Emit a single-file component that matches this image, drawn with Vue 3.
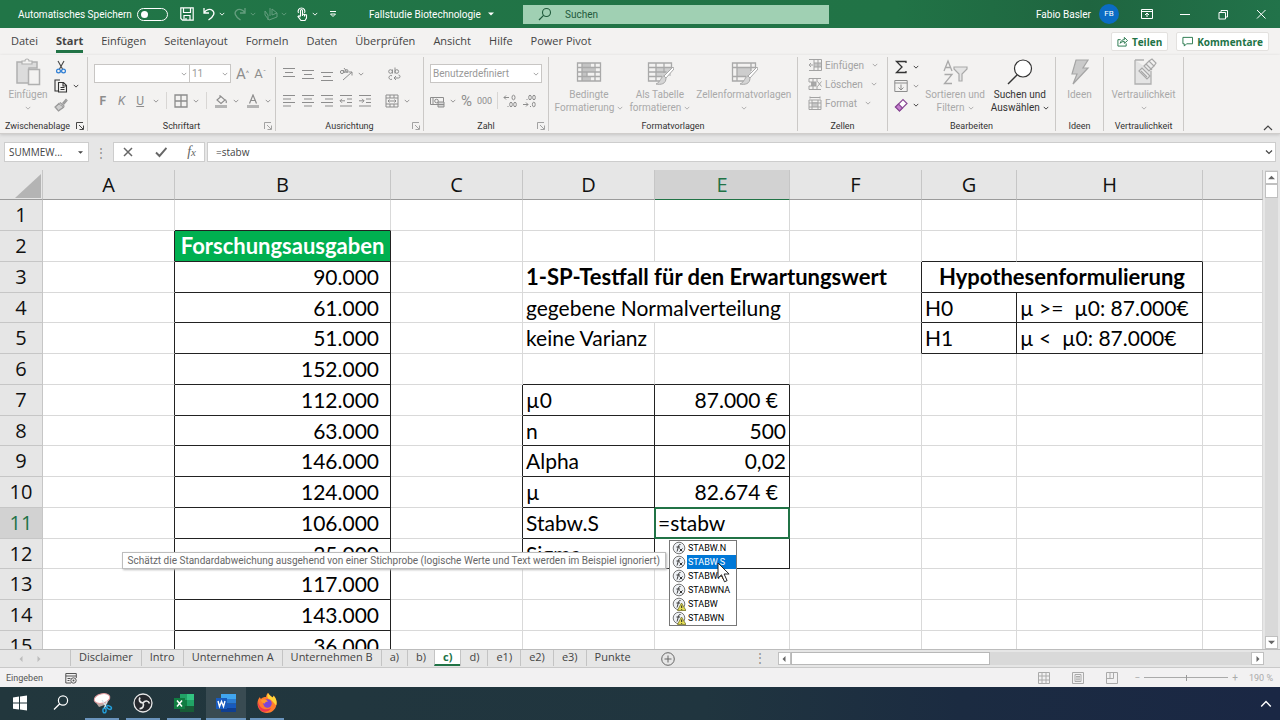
<template>
  <div class="window">
    <!-- title bar -->
    <header class="titlebar">
      <div class="title-left">
        <label class="autosave" for="autosave">Automatisches Speichern</label>
        <input id="autosave" type="checkbox" class="toggle" />
        <div class="quick">
          <button v-for="q in quickAccess" :key="q.icon" :class="['q-btn', { faded: q.faded }]" :aria-label="q.label">
            <Icon :name="q.icon" :w="14" :h="14" />
            <Icon v-if="q.menu" name="chev" :w="6" :h="6" />
          </button>
        </div>
        <button class="doc-name">Fallstudie Biotechnologie <Icon name="triDown" :w="6" :h="6" /></button>
      </div>
      <div class="search">
        <Icon name="search" :w="14" :h="14" />
        <input type="text" aria-label="Suchen" placeholder="Suchen" />
      </div>
      <div class="title-right">
        <span class="user">Fabio Basler</span>
        <span class="avatar">FB</span>
        <button v-for="w in windowButtons" :key="w.icon" class="win-btn" :aria-label="w.label">
          <Icon :name="w.icon" :w="12" :h="12" />
        </button>
      </div>
    </header>

    <!-- ribbon tabs -->
    <nav class="tabs">
      <a v-for="t in tabs" :key="t" href="#" :class="['tab', { active: t === 'Start' }]">{{ t }}</a>
      <div class="tab-actions">
        <button class="action"><Icon name="share" :w="11" :h="11" />Teilen</button>
        <button class="action"><Icon name="comment" :w="11" :h="11" />Kommentare</button>
      </div>
    </nav>

    <!-- ribbon -->
    <section class="ribbon">
      <div class="group clipboard">
        <div class="group-body">
          <button class="big off">
            <Icon name="paste" :w="26" :h="28" />
            <span>Einfügen</span>
            <Icon name="chev" :w="6" :h="6" />
          </button>
          <div class="stack">
            <button class="small on" aria-label="Ausschneiden"><Icon name="cut" :w="14" :h="14" /></button>
            <button class="small on" aria-label="Kopieren"><Icon name="copy" :w="14" :h="14" /><Icon name="chev" :w="6" :h="6" /></button>
            <button class="small" aria-label="Format übertragen"><Icon name="brush" :w="14" :h="14" /></button>
          </div>
        </div>
        <div class="group-name dark-launch">Zwischenablage <Icon name="launch" :w="8" :h="8" class="launcher" /></div>
      </div>

      <div class="group font">
        <div class="group-body column">
          <div class="line">
            <select class="font-name" aria-label="Schriftart"><option></option></select>
            <select class="font-size" aria-label="Schriftgrad"><option>11</option></select>
            <button class="small letter-lg">A<sup>^</sup></button>
            <button class="small letter-sm">A<sup>ˇ</sup></button>
          </div>
          <div class="line spaced">
            <button class="small letter bold">F</button>
            <button class="small letter italic">K</button>
            <button class="small letter under">U</button>
            <Icon name="chev" :w="6" :h="6" />
            <span class="split"></span>
            <button class="small" aria-label="Rahmen"><Icon name="borders" :w="14" :h="14" /><Icon name="chev" :w="6" :h="6" /></button>
            <span class="split"></span>
            <button class="small" aria-label="Füllfarbe"><Icon name="fill" :w="14" :h="14" /><Icon name="chev" :w="6" :h="6" /></button>
            <button class="small" aria-label="Schriftfarbe"><Icon name="fontColor" :w="14" :h="14" /><Icon name="chev" :w="6" :h="6" /></button>
          </div>
        </div>
        <div class="group-name">Schriftart <Icon name="launch" :w="8" :h="8" class="launcher" /></div>
      </div>

      <div class="group align">
        <div class="group-body column">
          <div class="line">
            <button class="small" aria-label="Oben ausrichten"><Icon name="vTop" :w="14" :h="14" /></button>
            <button class="small" aria-label="Zentriert ausrichten"><Icon name="vMid" :w="14" :h="14" /></button>
            <button class="small" aria-label="Unten ausrichten"><Icon name="vBot" :w="14" :h="14" /></button>
            <button class="small" aria-label="Ausrichtung"><Icon name="orient" :w="14" :h="14" /><Icon name="chev" :w="6" :h="6" /></button>
            <button class="small wrap" aria-label="Textumbruch"><Icon name="wrap" :w="14" :h="14" /></button>
          </div>
          <div class="line">
            <button class="small" aria-label="Linksbündig"><Icon name="hLeft" :w="14" :h="14" /></button>
            <button class="small" aria-label="Zentriert"><Icon name="hMid" :w="14" :h="14" /></button>
            <button class="small" aria-label="Rechtsbündig"><Icon name="hRight" :w="14" :h="14" /></button>
            <button class="small" aria-label="Einzug verkleinern"><Icon name="outdent" :w="14" :h="14" /></button>
            <button class="small" aria-label="Einzug vergrößern"><Icon name="indent" :w="14" :h="14" /></button>
            <button class="small merge" aria-label="Verbinden"><Icon name="merge" :w="14" :h="14" /><Icon name="chev" :w="6" :h="6" /></button>
          </div>
        </div>
        <div class="group-name">Ausrichtung <Icon name="launch" :w="8" :h="8" class="launcher" /></div>
      </div>

      <div class="group number">
        <div class="group-body column">
          <div class="line">
            <select class="format" aria-label="Zahlenformat"><option>Benutzerdefiniert</option></select>
          </div>
          <div class="line">
            <button class="small" aria-label="Währung"><Icon name="money" :w="15" :h="14" /><Icon name="chev" :w="6" :h="6" /></button>
            <button class="small percent">%</button>
            <button class="small thousand">000</button>
            <span class="split"></span>
            <button class="small" aria-label="Dezimalstelle hinzufügen"><Icon name="decMore" :w="14" :h="14" /></button>
            <button class="small" aria-label="Dezimalstelle entfernen"><Icon name="decLess" :w="14" :h="14" /></button>
          </div>
        </div>
        <div class="group-name">Zahl <Icon name="launch" :w="8" :h="8" class="launcher" /></div>
      </div>

      <div class="group styles">
        <div class="group-body">
          <button class="big off">
            <Icon name="conditional" :w="28" :h="28" />
            <span>Bedingte</span>
            <span>Formatierung <Icon name="chev" :w="6" :h="6" /></span>
          </button>
          <button class="big off">
            <Icon name="tableFormat" :w="28" :h="28" />
            <span>Als Tabelle</span>
            <span>formatieren <Icon name="chev" :w="6" :h="6" /></span>
          </button>
          <button class="big off">
            <Icon name="cellStyles" :w="28" :h="28" />
            <span>Zellenformatvorlagen</span>
            <Icon name="chev" :w="6" :h="6" />
          </button>
        </div>
        <div class="group-name">Formatvorlagen</div>
      </div>

      <div class="group cells">
        <div class="group-body column tight">
          <button v-for="c in cellActions" :key="c.label" class="small text">
            <Icon :name="c.icon" :w="14" :h="14" />{{ c.label }}<Icon name="chev" :w="6" :h="6" />
          </button>
        </div>
        <div class="group-name">Zellen</div>
      </div>

      <div class="group edit">
        <div class="group-body">
          <div class="stack">
            <button class="small on" aria-label="Summe"><Icon name="sum" :w="14" :h="14" /><Icon name="chev" :w="6" :h="6" /></button>
            <button class="small" aria-label="Ausfüllen"><Icon name="fillDown" :w="14" :h="14" /><Icon name="chev" :w="6" :h="6" /></button>
            <button class="small on" aria-label="Löschen"><Icon name="eraser" :w="14" :h="14" /><Icon name="chev" :w="6" :h="6" /></button>
          </div>
          <button class="big off">
            <Icon name="sort" :w="26" :h="28" />
            <span>Sortieren und</span>
            <span>Filtern <Icon name="chev" :w="6" :h="6" /></span>
          </button>
          <button class="big">
            <Icon name="find" :w="26" :h="28" />
            <span>Suchen und</span>
            <span>Auswählen <Icon name="chev" :w="6" :h="6" /></span>
          </button>
        </div>
        <div class="group-name">Bearbeiten</div>
      </div>

      <div class="group ideas">
        <div class="group-body">
          <button class="big off"><Icon name="bolt" :w="26" :h="28" /><span>Ideen</span></button>
        </div>
        <div class="group-name">Ideen</div>
      </div>

      <div class="group privacy">
        <div class="group-body">
          <button class="big off">
            <Icon name="sensitivity" :w="26" :h="28" />
            <span>Vertraulichkeit</span>
            <Icon name="chev" :w="6" :h="6" />
          </button>
        </div>
        <div class="group-name">Vertraulichkeit</div>
      </div>
      <button class="collapse" aria-label="Menüband reduzieren"><Icon name="caretUp" :w="10" :h="8" /></button>
    </section>

    <!-- formula bar -->
    <section class="formula">
      <button class="name-box">SUMMEW...<Icon name="triDown" :w="5" :h="5" /></button>
      <span class="grip">⋮</span>
      <div class="fx">
        <button aria-label="Abbrechen"><Icon name="cancel" :w="12" :h="12" /></button>
        <button aria-label="Eingeben"><Icon name="check" :w="12" :h="12" /></button>
        <button class="fx-sign"><i>f</i><i class="x">x</i></button>
      </div>
      <div class="formula-input">
        <input v-model="formula" type="text" aria-label="Bearbeitungsleiste" />
        <Icon name="chev" :w="8" :h="8" />
      </div>
    </section>

    <!-- worksheet -->
    <main class="sheet">
      <div class="grid">
        <table>
          <colgroup>
            <col class="c-head" /><col class="c-a" /><col class="c-b" /><col class="c-a" /><col class="c-a" />
            <col class="c-e" /><col class="c-a" /><col class="c-g" /><col class="c-h" /><col />
          </colgroup>
          <thead>
            <tr>
              <th class="corner"><Icon name="corner" :w="26" :h="24" /></th>
              <th v-for="c in columns" :key="c" :class="{ current: c === 'E' }">{{ c }}</th>
              <th></th>
            </tr>
          </thead>
          <tbody>
            <tr v-for="row in rows" :key="row.n">
              <th :class="{ current: row.n === 11 }">{{ row.n }}</th>
              <td v-for="cell in row.cells" :key="cell.id" :colspan="cell.span" :class="cell.cls">
                <template v-if="cell.id !== 'E11'">{{ cell.text }}</template>
                <div v-else class="editor">
                  <input v-model="formula" type="text" aria-label="Zelle E11" />
                  <div class="hint">Schätzt die Standardabweichung ausgehend von einer Stichprobe (logische Werte und Text werden im Beispiel ignoriert)</div>
                  <ul class="suggest">
                    <li v-for="s in suggestions" :key="s.name" :class="{ picked: s.name === 'STABW.S' }">
                      <Icon :name="s.old ? 'fnOld' : 'fn'" :w="14" :h="14" /><span>{{ s.name }}</span>
                    </li>
                  </ul>
                  <Icon name="pointer" :w="14" :h="22" class="pointer" />
                </div>
              </td>
            </tr>
          </tbody>
        </table>
      </div>
      <div class="vscroll">
        <button aria-label="Nach oben"><Icon name="triUp" :w="7" :h="7" /></button>
        <span class="thumb"></span>
        <button class="end" aria-label="Nach unten"><Icon name="triDown" :w="7" :h="7" /></button>
      </div>
    </main>

    <!-- sheet tabs -->
    <section class="sheet-bar">
      <div class="arrows"><Icon name="triLeft" :w="6" :h="6" /><Icon name="triRight" :w="6" :h="6" /></div>
      <button v-for="s in sheets" :key="s" :class="['sheet-tab', { active: s === 'c)' }]">{{ s }}</button>
      <button class="add" aria-label="Neues Blatt"><Icon name="plus" :w="14" :h="14" /></button>
      <span class="grip">⋮</span>
      <div class="hscroll">
        <button aria-label="Nach links"><Icon name="triLeft" :w="6" :h="6" /></button>
        <span class="thumb"></span>
        <button class="end" aria-label="Nach rechts"><Icon name="triRight" :w="6" :h="6" /></button>
      </div>
    </section>

    <!-- status bar -->
    <footer class="status">
      <span>Eingeben</span>
      <Icon name="macro" :w="12" :h="12" class="macro" />
      <div class="views">
        <button aria-label="Normal"><Icon name="viewGrid" :w="12" :h="12" /></button>
        <button aria-label="Seitenlayout"><Icon name="viewPage" :w="12" :h="12" /></button>
        <button aria-label="Umbruchvorschau"><Icon name="viewBreak" :w="12" :h="12" /></button>
      </div>
      <span class="sign">−</span>
      <input class="zoom" type="range" min="10" max="370" value="190" aria-label="Zoom" />
      <span class="sign">+</span>
      <span class="percent-label">190 %</span>
    </footer>

    <!-- taskbar -->
    <footer class="taskbar">
      <button v-for="a in apps" :key="a.icon" :class="['app', { open: a.open, front: a.front }]" :aria-label="a.label">
        <Icon :name="a.icon" :w="22" :h="22" />
      </button>
      <button class="tray" aria-label="Ausgeblendete Symbole"><Icon name="caretUp" :w="12" :h="10" /></button>
    </footer>
  </div>
</template>

<script setup>
import { ref, h } from 'vue'

const formula = ref('=stabw')

const line = 'fill="none" stroke="currentColor"'

// Inner markup of every icon, with its own view box
const icons = {
  chev: ['0 0 8 8', `<path d="M1 2.5 4 5.5 7 2.5" ${line} stroke-width="1.2"/>`],
  caretUp: ['0 0 10 8', `<path d="M1 6 5 2 9 6" ${line} stroke-width="1.2"/>`],
  triDown: ['0 0 8 8', '<path d="M0 2h8L4 6z" fill="currentColor"/>'],
  triUp: ['0 0 8 8', '<path d="M0 6h8L4 2z" fill="currentColor"/>'],
  triLeft: ['0 0 8 8', '<path d="M6 0v8L2 4z" fill="currentColor"/>'],
  triRight: ['0 0 8 8', '<path d="M2 0v8l4-4z" fill="currentColor"/>'],
  corner: ['0 0 26 24', '<path d="M26 0v24H0z" fill="#b4b4b4"/>'],
  save: ['0 0 14 14', `<path d="M.8.8h12.4v12.4H2.5L.8 11.5zM3.5.8v4.7h7V.8M4 13V8.500h6V13M6 11v2" ${line} stroke-width="1.2"/>`],
  undo: ['0 0 14 14', `<path d="M2 1v5h5M2 6C4 2.500 8 1.500 10.500 3.500S12.500 9 6.500 13" ${line} stroke-width="1.300"/>`],
  redo: ['0 0 14 14', `<path d="M12 1v5H7M12 6C10 2.500 6 1.500 3.500 3.500S1.500 9 7.500 13" ${line} stroke-width="1.300"/>`],
  chartPen: ['0 0 14 14', `<path d="M1 8l4 5 8-3V6L8 2v6M1 8V4l3 4v5M8 8l5-2M6 1v8" ${line}/>`],
  touch: ['0 0 14 14', `<path d="M5.500 9V3.500a1 1 0 0 1 2 0V7l4 1v3l-1.500 2.500H6L3 9.500l1-.8L5.500 10M7.500 7v2M9.500 7.500v2" ${line} stroke-width="1.100"/><path d="M3.500 6a3.400 3.400 0 1 1 6 0" ${line} stroke-width="1.100"/>`],
  custom: ['0 0 14 14', `<path d="M4 4.500h6" ${line}/><path d="M4.500 7h5L7 9.500z" ${line}/>`],
  search: ['0 0 14 14', `<circle cx="8.500" cy="5.500" r="4" ${line} stroke-width="1.100"/><path d="M5.600 8.400 1 13" ${line} stroke-width="1.200"/>`],
  display: ['0 0 12 12', `<path d="M.5 1.500h11v9H.5zM.5 3.500h11" ${line}/><path d="M6 9V5M4 7l2-2 2 2" ${line}/>`],
  minimize: ['0 0 12 12', `<path d="M1 6.500h10" ${line}/>`],
  restore: ['0 0 12 12', `<path d="M2 4.500h6.500V11H2zM4 4V2.500h6.500V9H9" ${line}/>`],
  close: ['0 0 12 12', `<path d="M2 2l8.500 8.500M10.500 2 2 10.500" ${line}/>`],
  share: ['0 0 12 12', `<path d="M4 4H1v7h9V8M3.500 8C4 5 6 4 8 4V1.500L11.500 5 8 8V6C6 6 4.500 6.500 3.500 8z" ${line}/>`],
  comment: ['0 0 12 12', `<path d="M1 1.500h10.500v7H5L2.500 11V8.500H1z" ${line}/>`],
  launch: ['0 0 8 8', `<path d="M.5 7V.5H7M3 3l4 4M7.500 3.500v4h-4" ${line} stroke-width=".9"/>`],
  paste: ['0 0 26 28', `<path d="M2 4h20v6h-8v15H2z" fill="#dcdcdc" stroke="#b0b0b0" stroke-width="1.500"/><path d="M7 6V3h3a2 2 0 0 1 4 0h3v3z" fill="#f3f2f1" stroke="#b0b0b0" stroke-width="1.200"/><path d="M13.500 11.500h11v15h-11z" fill="#f3f2f1" stroke="#b0b0b0" stroke-width="1.500"/>`],
  cut: ['0 0 14 14', '<path d="M4 1l4.500 8M10 1 5.500 9" fill="none" stroke="#444" stroke-width="1.100"/><circle cx="4.500" cy="11" r="1.900" fill="none" stroke="#2b7cd3" stroke-width="1.200"/><circle cx="9.500" cy="11" r="1.900" fill="none" stroke="#2b7cd3" stroke-width="1.200"/>'],
  copy: ['0 0 14 14', `<path d="M4 12H1V1h5M4.500 3.500h5l3 3V13h-8zM9 3.500V7h3.500M6.500 8.500h4M6.500 10.500h4" ${line} stroke-width="1.100"/>`],
  brush: ['0 0 14 14', `<path d="M8.500 5.500 12 1.500l1 1-3.500 4M6 4.500l4.500 4M5.500 5 1 9l3.500 4L10 9" fill="none" stroke="#999" stroke-width="1.200"/><path d="M5 6 1.500 9l3 3.500L9.500 9z" fill="#cfcfcf" stroke="#999"/>`],
  borders: ['0 0 14 14', `<path d="M1 1h12v12H1zM7 1v12M1 7h12" ${line} stroke-width="1.300"/>`],
  fill: ['0 0 14 14', `<path d="M6 1v3M3 6l4-3.500L11 6 7 9.500zM11.500 5.500c1 1.500 1.200 2.500.5 3.500" ${line} stroke-width="1.100"/><path d="M1 11h12v3H1z" fill="#b5b5b5"/>`],
  fontColor: ['0 0 14 14', `<path d="M3.500 9.500 7 1l3.500 8.500M4.800 6.500h4.400" ${line} stroke-width="1.200"/><path d="M1 11h12v3H1z" fill="#b5b5b5"/>`],
  vTop: ['0 0 14 14', `<path d="M1 1.500h12M3 5.500h8M1 9.500h12" ${line}/>`],
  vMid: ['0 0 14 14', `<path d="M1 3.500h12M3 7.500h8M1 11.500h12" ${line}/>`],
  vBot: ['0 0 14 14', `<path d="M1 5.500h12M3 9.500h8M1 13.500h12" ${line}/>`],
  hLeft: ['0 0 14 14', `<path d="M1 1.500h12M1 5h8M1 8.500h12M1 12h8" ${line}/>`],
  hMid: ['0 0 14 14', `<path d="M1 1.500h12M3 5h8M1 8.500h12M3 12h8" ${line}/>`],
  hRight: ['0 0 14 14', `<path d="M1 1.500h12M5 5h8M1 8.500h12M5 12h8" ${line}/>`],
  outdent: ['0 0 14 14', `<path d="M1 1.500h12M8 5h5M8 8.500h5M1 12h12M6 6.800H1M3 4.800l-2 2 2 2" ${line}/>`],
  indent: ['0 0 14 14', `<path d="M1 1.500h12M8 5h5M8 8.500h5M1 12h12M1 6.800h5M4 4.800l2 2-2 2" ${line}/>`],
  orient: ['0 0 14 14', `<path d="M4 13 13 5M9.500 5H13v3.500" ${line}/><circle cx="3" cy="5" r="1.600" ${line}/><path d="M4 3l2 3M5 1l3.500 4.500" ${line}/><circle cx="7.500" cy="4" r="1.500" ${line}/>`],
  wrap: ['0 0 14 14', `<circle cx="3.500" cy="4.500" r="1.800" ${line}/><path d="M5.500 2.500v4M8 .5v6M5 8.800a2 2 0 1 0 0 3.400M7 11h4.500a1.500 1.500 0 0 0 0-3M9 9l-2 2 2 2" ${line}/><circle cx="9.800" cy="4.500" r="1.800" ${line}/>`],
  merge: ['0 0 14 14', `<path d="M1 1h12v12H1zM1 4h12M1 10h12M5 1v3M9 1v3M5 10v3M9 10v3" ${line}/><path d="M3 7h8M4.500 5.500 3 7l1.500 1.500M9.500 5.500 11 7 9.500 8.500" ${line}/>`],
  money: ['0 0 15 14', `<path d="M.5 3.500h13v7H.5zM3 3.500v7" ${line}/><circle cx="6.500" cy="7" r="1.800" ${line}/><path d="M8 8h6v5H8z" fill="#d5d5d5" stroke="currentColor"/><path d="M8 10.500h6" ${line}/>`],
  decMore: ['0 0 14 14', `<path d="M1 3.500h5M3 1.500l-2 2 2 2M4.500 12.500h1" ${line}/><ellipse cx="10.500" cy="3.500" rx="1.500" ry="2.300" ${line}/><ellipse cx="8" cy="10.500" rx="1.300" ry="2.300" ${line}/><ellipse cx="12" cy="10.500" rx="1.300" ry="2.300" ${line}/>`],
  decLess: ['0 0 14 14', `<path d="M1 10.500h5M4 8.500l2 2-2 2M4.500 5.500h1M8 12.500h1" ${line}/><ellipse cx="8" cy="3.500" rx="1.300" ry="2.300" ${line}/><ellipse cx="12" cy="3.500" rx="1.300" ry="2.300" ${line}/><ellipse cx="11.800" cy="10.500" rx="1.400" ry="2.300" ${line}/>`],
  conditional: ['0 0 28 28', `<path d="M7 5h9v4H7zM7 9h12v5H7zM7 14h5v4H7zM7 18h9v5H7z" fill="#c4c4c4"/><path d="M2.500 5h23v18h-23zM7 5v18M20 5v18M12 14v4M2.500 9.500h23M2.500 14h23M2.500 18.500h23" ${line} stroke-width="1.300"/>`],
  tableFormat: ['0 0 28 28', `<path d="M10 10h15v8H10z" fill="#d0d0d0"/><path d="M14 23H2.500V5h23v5M2.500 9.500h23M2.500 14h18M2.500 18.500H16M10 5v18M18 5v10" ${line} stroke-width="1.300"/><path d="M27 9 18 18l2 2 8-9z" fill="#fff" stroke="currentColor"/><path d="M18 18c-3 0-3 6-8 8 5 1 10 0 10-6z" fill="#d5d5d5" stroke="currentColor"/>`],
  cellStyles: ['0 0 28 28', `<path d="M7 9h14v9H7z" fill="#cdcdcd"/><path d="M14 23H2.500V5h23v5M2.500 9.500h23M2.500 18.500H16M7 5v18M21 5v8" ${line} stroke-width="1.300"/><path d="M27 9 18 18l2 2 8-9z" fill="#fff" stroke="currentColor"/><path d="M18 18c-3 0-3 6-8 8 5 1 10 0 10-6z" fill="#d5d5d5" stroke="currentColor"/>`],
  insert: ['0 0 14 14', `<path d="M6 5h7v4H6z" fill="#c8c8c8"/><path d="M3 1.500h10.500v11H3M6 1.500v11M10 1.500v11M6 5h7.500M6 9h7.500M1 1.500h2M1 12.500h2M5 7H1M3 5 1 7l2 2" ${line}/>`],
  remove: ['0 0 14 14', `<path d="M3 5h5v4H3z" fill="#aaa"/><path d="M13 1.500H1V5h7v4H1v3.500h12M5 1.500v11M9 1.500V5M9 9v3.500M9.500 4.500l4 5M13.500 4.500l-4 5" ${line}/>`],
  format: ['0 0 14 14', `<path d="M4 6h6v5H4z" fill="#c8c8c8"/><path d="M1 4h12v9.500H1zM4 4v9.500M10 4v9.500M1 7h12M1 11h12M2 1.500h10M2 .5v2M12 .5v2" ${line}/>`],
  sum: ['0 0 14 14', `<path d="M12 3V1.500H2.500L8 7l-5.500 5.500H12V11" ${line} stroke-width="1.300"/>`],
  fillDown: ['0 0 14 14', `<path d="M.8 1.500h12.400v11H.8zM.8 4h12.400M7 5.500V11M4.500 8.500 7 11l2.500-2.500" ${line}/>`],
  eraser: ['0 0 14 14', '<path d="M1.500 9 9 1.500l4 4L5.500 13z" fill="#fff" stroke="#8a4a95" stroke-width="1.200"/><path d="M1.500 9l3-3 4 4-3 3z" fill="#c77fd0" stroke="#8a4a95" stroke-width="1.200"/>'],
  sort: ['0 0 26 28', `<path d="M2 13 6 3l4 10M3.500 9.500h5M2.500 16.500H10L2.500 25.500H10" ${line} stroke-width="1.300"/><path d="M12 9h13v2l-5 5v7h-3v-7l-5-5z" fill="#e4e4e4" stroke="currentColor" stroke-width="1.200"/>`],
  find: ['0 0 26 28', `<circle cx="16" cy="10.500" r="8.500" fill="#fff" stroke="currentColor" stroke-width="1.200"/><path d="M10 17 1 26" ${line} stroke-width="1.400"/>`],
  bolt: ['0 0 26 28', '<path d="M9 2h12l-5 8h5L6 26l4-10H5z" fill="#cacaca" stroke="#a5a5a5" stroke-width="1.200"/>'],
  sensitivity: ['0 0 26 28', '<path d="M4 2h9M20 13v13H4V2" fill="#e4e4e4" stroke="#b0b0b0" stroke-width="1.300"/><path d="M8 13l3-3 8 8-3 3zM13 8l5-5 5 5-5 5z" fill="#ececec" stroke="#a8a8a8" stroke-width="1.200"/><path d="M15 6l6 6M18 3l3-2 4 4-2 3M10 13l6 6" fill="none" stroke="#a8a8a8" stroke-width="1.200"/>'],
  cancel: ['0 0 12 12', `<path d="M2 2l8 8M10 2l-8 8" ${line} stroke-width="1.500"/>`],
  check: ['0 0 12 12', `<path d="M1 6.500 4.500 10 11.500 2" ${line} stroke-width="1.900"/>`],
  fn: ['0 0 14 14', '<circle cx="7" cy="7" r="5.800" fill="#eef1f5" stroke="#777"/><path d="M8.500 3.500C6 3 6.500 7 5 10.500M4.500 6h3.500M7.500 7.500l3 3M10.500 7.500l-3 3" fill="none" stroke="#333"/>'],
  fnOld: ['0 0 14 14', '<circle cx="7" cy="7" r="5.800" fill="#eef1f5" stroke="#777"/><path d="M8.500 3.500C6 3 6.500 7 5 10.500M4.500 6h3.500" fill="none" stroke="#333"/><path d="M9.500 6 14 13.500H5.500z" fill="#e3dc55" stroke="#77732a" stroke-width=".8"/><path d="M9.700 8.500v2.500M9.700 12v.8" stroke="#222"/>'],
  pointer: ['0 0 14 22', '<path d="M1 1v15l3.500-3.200 3 7 2.600-1.200-3-6.600h5z" fill="#fff" stroke="#222"/>'],
  plus: ['0 0 14 14', `<circle cx="7" cy="7" r="6.300" ${line}/><path d="M7 3.500v7M3.500 7h7" ${line}/>`],
  macro: ['0 0 12 12', `<path d="M6 11H.8V1.500h10.500V6M.8 4h10.500M2.500 6.500h3M2.500 8.500h2" ${line}/><circle cx="8.500" cy="8.500" r="2.700" ${line}/><circle cx="8.500" cy="8.500" r="1" fill="currentColor"/>`],
  viewGrid: ['0 0 12 12', `<path d="M.5.5h11v11H.5zM4 .5v11M8 .5v11M.5 4h11M.5 8h11" ${line}/>`],
  viewPage: ['0 0 12 12', `<path d="M.5.5h11v11H.5zM3 2.500h6v7H3zM4 4.500h4M4 6h4M4 7.800h4" ${line}/>`],
  viewBreak: ['0 0 12 12', `<path d="M.5.500h11v11H.5zM.5 6.500h7v-6M4 .5v6" ${line}/>`],
  windows: ['0 0 22 22', '<path d="M4 5.500l6-.9V10.600H4zM11 4.500l7-1v7.100h-7zM4 11.500h6v6.100l-6-.9zM11 11.500h7v7l-7-1z" fill="#fff"/>'],
  taskSearch: ['0 0 22 22', '<circle cx="13" cy="8.500" r="4.600" fill="none" stroke="#fff" stroke-width="1.200"/><path d="M9.800 11.800 4 17.500" stroke="#fff" stroke-width="1.300"/>'],
  snip: ['0 0 22 22', '<path d="M3 8l5 7 8-3 3-7z" fill="#b9a8a4"/><ellipse cx="11" cy="6.500" rx="8" ry="4.600" fill="#fff" stroke="#e59da0" transform="rotate(-14 11 6.500)"/><path d="M11 8l5 8M16 9l-3 8" stroke="#d8e4ea" stroke-width="1.200"/><ellipse cx="18" cy="15.500" rx="2.600" ry="1.600" fill="none" stroke="#23a0dc" stroke-width="1.400" transform="rotate(25 18 15.500)"/><ellipse cx="13.500" cy="18.500" rx="1.600" ry="2.400" fill="none" stroke="#23a0dc" stroke-width="1.400"/>'],
  obs: ['0 0 22 22', '<circle cx="11" cy="11" r="9" fill="#26292e" stroke="#e8e8e8" stroke-width="1.300"/><path d="M11 11C7.500 10.500 6.500 8 8 5.500M11 11c2-3 5.500-2.500 6.500.5M11 11c1.500 3.200-.5 5.800-3.500 5.500" fill="none" stroke="#e8e8e8" stroke-width="1.700"/>'],
  excel: ['0 0 22 22', '<path d="M7 2h14v18H7z" fill="#21a366"/><path d="M14 2h7v6h-7z" fill="#33c481"/><path d="M7 8h7v6H7z" fill="#107c41"/><path d="M7 14h14v6H7z" fill="#185c37"/><path d="M1 6h11v11H1z" fill="#107c41"/><path d="M4 8.500l5 6M9 8.500l-5 6" stroke="#fff" stroke-width="1.500"/>'],
  word: ['0 0 22 22', '<path d="M6 2h15v5H6z" fill="#41a5ee"/><path d="M6 7h15v4.500H6z" fill="#2b7cd3"/><path d="M6 11.500h15V16H6z" fill="#185abd"/><path d="M6 16h15v4H6z" fill="#103f91"/><path d="M1 6h11v11H1z" fill="#185abd"/><path d="M3 9l1.500 5.500 2-5 2 5L10 9" fill="none" stroke="#fff" stroke-width="1.400"/>'],
  firefox: ['0 0 22 22', '<path d="M12 1c1 2 3 3 4.500 4.500 1-.5 1-1.500 1-2C20 6 21 9 20.500 12.500 19.500 18 15.500 21 11 21 5.500 21 1.500 17 1.500 11.500c0-3 1-5 2.500-6.500 0 1 .5 1.500 1 2C6 5.500 8 5 10 5c0-1.500 1-3 2-4z" fill="#ff7b2e"/><path d="M12 1c1 2 3 3 4.500 4.500 1-.5 1-1.500 1-2C20 6 21 9 20.500 12.500c-1 2-3-4-7.500-5.500-2-.8-2-4-1-6z" fill="#ffd43a"/><path d="M2 9c1 8 8 10 13 7-2 4-7 5-10 2.500C2.500 16 1.500 13 2 9z" fill="#f0364f"/><circle cx="11.500" cy="11.500" r="4.200" fill="#7b45d8"/><path d="M5 8c3-1.500 5-.5 7 1.500-2 0-3 .8-3 2-2 0-4-1.500-4-3.500z" fill="#ff9a2c"/>'],
}

const Icon = (props) => h('svg', {
  class: 'icon',
  viewBox: icons[props.name][0],
  width: props.w,
  height: props.h,
  'aria-hidden': 'true',
  innerHTML: icons[props.name][1],
})
Icon.props = ['name', 'w', 'h']

const quickAccess = [
  { icon: 'save', label: 'Speichern' },
  { icon: 'undo', label: 'Rückgängig', menu: true },
  { icon: 'redo', label: 'Wiederholen', menu: true, faded: true },
  { icon: 'chartPen', label: 'Diagramm', menu: true, faded: true },
  { icon: 'touch', label: 'Touchmodus', menu: true },
  { icon: 'custom', label: 'Anpassen' },
]

const windowButtons = [
  { icon: 'display', label: 'Menüband-Anzeigeoptionen' },
  { icon: 'minimize', label: 'Minimieren' },
  { icon: 'restore', label: 'Verkleinern' },
  { icon: 'close', label: 'Schließen' },
]

const tabs = ['Datei', 'Start', 'Einfügen', 'Seitenlayout', 'Formeln', 'Daten', 'Überprüfen', 'Ansicht', 'Hilfe', 'Power Pivot']

const cellActions = [
  { icon: 'insert', label: 'Einfügen' },
  { icon: 'remove', label: 'Löschen' },
  { icon: 'format', label: 'Format' },
]

const sheets = ['Disclaimer', 'Intro', 'Unternehmen A', 'Unternehmen B', 'a)', 'b)', 'c)', 'd)', 'e1)', 'e2)', 'e3)', 'Punkte']

const suggestions = [
  { name: 'STABW.N' },
  { name: 'STABW.S' },
  { name: 'STABWA' },
  { name: 'STABWNA' },
  { name: 'STABW', old: true },
  { name: 'STABWN', old: true },
]

const apps = [
  { icon: 'windows', label: 'Start' },
  { icon: 'taskSearch', label: 'Suche' },
  { icon: 'snip', label: 'Snipping Tool', open: true },
  { icon: 'obs', label: 'OBS', open: true },
  { icon: 'excel', label: 'Excel', open: true },
  { icon: 'word', label: 'Word', open: true, front: true },
  { icon: 'firefox', label: 'Firefox', open: true },
]

const columns = ['A', 'B', 'C', 'D', 'E', 'F', 'G', 'H']

// Cell content, keyed by address
const content = {
  B2: { text: 'Forschungsausgaben', cls: 'title' },
  D3: { text: '1-SP-Testfall für den Erwartungswert', cls: 'strong', span: 3 },
  D4: { text: 'gegebene Normalverteilung', span: 2 },
  D5: { text: 'keine Varianz' },
  G3: { text: 'Hypothesenformulierung', cls: 'strong center', span: 2 },
  G4: { text: 'H0' },
  H4: { text: 'µ >=  µ0: 87.000€' },
  G5: { text: 'H1' },
  H5: { text: 'µ <  µ0: 87.000€' },
  D7: { text: 'µ0' },
  E7: { text: '87.000 €', cls: 'amount' },
  D8: { text: 'n' },
  E8: { text: '500', cls: 'num' },
  D9: { text: 'Alpha' },
  E9: { text: '0,02', cls: 'num' },
  D10: { text: 'µ' },
  E10: { text: '82.674 €', cls: 'amount' },
  D11: { text: 'Stabw.S' },
  E11: { text: '', cls: 'editing' },
  D12: { text: 'Sigma' },
}

const spending = ['90.000', '61.000', '51.000', '152.000', '112.000', '63.000', '146.000', '124.000', '106.000', '25.000', '117.000', '143.000', '36.000']
spending.forEach((v, i) => {
  content['B' + (i + 3)] = { text: v, cls: 'amount' }
})

// Framed blocks as [first column, last column, first row, last row]
const frames = [['B', 'B', 2, 15], ['D', 'E', 7, 12], ['G', 'H', 3, 5]]
const inFrame = (c, r) => frames.some(([a, b, top, bottom]) => c >= a && c <= b && r >= top && r <= bottom)

const rows = Array.from({ length: 15 }, (_, i) => {
  const n = i + 1
  const cells = []
  for (let j = 0; j < columns.length;) {
    const id = columns[j] + n
    const data = content[id] || {}
    const span = data.span || 1
    const last = columns[j + span - 1]
    const next = columns[j + span] || 'Z'
    cells.push({
      id,
      span,
      text: data.text || '',
      cls: [data.cls, {
        'edge-right': inFrame(last, n) || inFrame(next, n),
        'edge-bottom': inFrame(columns[j], n) || inFrame(columns[j], n + 1),
        'above-edit': id === 'E10',
        'before-edit': id === 'D11',
      }],
    })
    j += span
  }
  cells.push({ id: 'I' + n, span: 1, text: '', cls: '' })
  return { n, cells }
})
</script>

<style>
body {
  margin: 0;
}
</style>

<style scoped>
.window {
  display: flex;
  flex-direction: column;
  height: 100vh;
  overflow: hidden;
  background: #e6e6e6;
  color: #444;
  font-family: Roboto, "Open Sans", sans-serif;
  font-size: 10px;
}
.icon {
  display: block;
  flex: none;
}
button {
  display: flex;
  align-items: center;
  margin: 0;
  padding: 0;
  border: 0;
  background: none;
  color: inherit;
  font: inherit;
  white-space: nowrap;
}
input,
select {
  min-width: 0;
  margin: 0;
  box-sizing: border-box;
  font: inherit;
  color: inherit;
}

/* title bar */
.titlebar {
  display: grid;
  grid-template-columns: 523fr 306fr 451fr;
  align-items: center;
  height: 28px;
  flex: none;
  background: linear-gradient(90deg, #217547, #217346 70%, #1f6540 85%, #22734a);
  color: #fff;
}
.title-left,
.title-right {
  display: flex;
  align-items: center;
}
.title-left {
  padding-left: 18px;
}
.autosave {
  white-space: nowrap;
}
.toggle {
  appearance: none;
  display: flex;
  align-items: center;
  width: 31px;
  height: 13px;
  margin-left: 5px;
  padding: 0 3px;
  border: 1px solid #fff;
  border-radius: 7px;
}
.toggle::before {
  content: "";
  width: 7px;
  height: 7px;
  border-radius: 50%;
  background: #fff;
}
.quick {
  display: flex;
  gap: 8px;
  margin-left: 12px;
}
.q-btn {
  gap: 3px;
}
.q-btn.faded {
  opacity: 0.3;
}
.doc-name {
  gap: 7px;
  margin: 0 auto;
}
.search {
  display: flex;
  align-items: center;
  gap: 11px;
  height: 19px;
  padding-left: 15px;
  background: #a0d0b3;
  color: #1f5a3b;
}
.search input {
  flex: 1;
  border: 0;
  background: none;
}
.search input::placeholder {
  color: #1f5a3b;
}
.title-right {
  justify-content: flex-end;
  padding-right: 13px;
}
.avatar {
  width: 20px;
  height: 20px;
  margin: 0 22px 0 8px;
  border-radius: 50%;
  background: #0b6cc4;
  font-size: 8px;
  line-height: 20px;
  text-align: center;
}
.win-btn + .win-btn {
  margin-left: 26px;
}

/* tabs */
.tabs {
  display: flex;
  align-items: center;
  height: 27px;
  flex: none;
  padding-left: 11px;
  background: #f3f2f1;
  font-family: "Open Sans", "Noto Sans", sans-serif;
  font-size: 11px;
  gap: 18px;
}
.tab {
  padding: 2px 0 1px;
  border-bottom: 3px solid transparent;
  color: #444;
  line-height: 17px;
  text-decoration: none;
  white-space: nowrap;
}
.tab.active {
  border-bottom-color: #217346;
  font-weight: 700;
}
.tab-actions {
  display: flex;
  gap: 8px;
  margin-left: auto;
  padding-right: 11px;
}
.action {
  gap: 4px;
  height: 19px;
  padding: 0 5px;
  border: 1px solid #e3e1df;
  border-radius: 2px;
  background: #fff;
  color: #217346;
  font-size: 10px;
  font-weight: 700;
}

/* ribbon */
.ribbon {
  display: flex;
  height: 78px;
  flex: none;
  background: #f3f2f1;
  border-bottom: 1px solid #cfcdcb;
  box-shadow: 0 1px 3px #c4c4c4;
}
.group {
  position: relative;
  display: flex;
  flex-direction: column;
  flex: none;
  box-sizing: border-box;
  margin: 2px 0;
  border-right: 1px solid #cbc9c7;
}
.clipboard { width: 88px; }
.font { width: 188px; }
.align { width: 148px; }
.number { width: 125px; }
.styles { width: 249px; }
.cells { width: 90px; }
.edit { width: 168px; }
.ideas { width: 48px; }
.privacy { width: 80px; }
.group-body {
  display: flex;
  justify-content: center;
  flex: 1;
  gap: 6px;
  color: #8d8d8d;
}
.group-body.column {
  flex-direction: column;
  justify-content: flex-start;
  gap: 8px;
  padding: 7px 4px 0 6px;
}
.group-body.tight {
  gap: 3px;
  padding: 0 0 0 10px;
}
.group-name {
  display: flex;
  justify-content: center;
  align-items: center;
  height: 10px;
  font-size: 9px;
  line-height: 10px;
  color: #333;
}
.launcher {
  position: absolute;
  right: 3px;
  bottom: 1px;
  color: #999;
}
.dark-launch {
  justify-content: flex-start;
  padding-left: 5px;
}
.dark-launch .launcher {
  color: #333;
}
.big {
  flex-direction: column;
  line-height: 13px;
  color: #333;
}
.big > .icon:first-child {
  margin: 1px 0 2px;
}
.big > .icon:last-child {
  margin-top: 4px;
}
.big span {
  display: flex;
  align-items: center;
  gap: 3px;
}
.big.off {
  color: #a9a9a9;
}
.stack {
  display: flex;
  flex-direction: column;
  gap: 5px;
  padding-top: 3px;
}
.small {
  gap: 5px;
  min-height: 14px;
  color: #8d8d8d;
}
.small.on {
  color: #333;
}
.small.text {
  height: 16px;
  gap: 3px;
  color: #a3a3a3;
}
.small.text .icon:last-child {
  margin-left: 5px;
}
.line {
  display: flex;
  align-items: center;
  gap: 5px;
  height: 19px;
}
.line select {
  appearance: none;
  height: 19px;
  padding: 0 2px;
  border: 1px solid #c8c6c4;
  border-radius: 0;
  background: #fff url("data:image/svg+xml,%3Csvg xmlns='http://www.w3.org/2000/svg' viewBox='0 0 8 8'%3E%3Cpath d='M1 2.500 4 5.500 7 2.500' fill='none' stroke='%23888'/%3E%3C/svg%3E") no-repeat right 2px center / 6px 6px;
  color: #999;
}
.line .font-name {
  width: 96px;
}
.line .font-size {
  width: 42px;
  margin-left: -6px;
}
.line .format {
  width: 112px;
}
.letter-lg,
.letter-sm {
  gap: 0;
  font-size: 15px;
}
.letter-sm {
  font-size: 13px;
}
.letter-lg sup,
.letter-sm sup {
  font-size: 8px;
  line-height: 8px;
}
.spaced {
  gap: 7px;
  padding-left: 3px;
}
.letter {
  justify-content: center;
  width: 12px;
  font-size: 12px;
}
.bold {
  font-weight: 700;
}
.italic {
  font-style: italic;
}
.under {
  text-decoration: underline;
}
.split {
  width: 1px;
  height: 17px;
  background: #d8d6d4;
}
.wrap {
  margin-left: 18px;
}
.merge {
  margin-left: 8px;
}
.percent {
  font-size: 15px;
}
.thousand {
  font-size: 9px;
}
.collapse {
  align-self: flex-end;
  margin: 0 7px 1px auto;
}

/* formula bar */
.formula {
  display: flex;
  align-items: center;
  height: 20px;
  flex: none;
  padding: 8px 4px;
  font-family: "Open Sans", "Noto Sans", sans-serif;
}
.name-box,
.fx,
.formula-input {
  display: flex;
  align-items: center;
  box-sizing: border-box;
  height: 20px;
  border: 1px solid #cdcdcd;
  background: #fff;
}
.name-box {
  justify-content: space-between;
  width: 85px;
  padding: 0 5px 0 4px;
}
.grip {
  color: #8c8c8c;
  font-size: 12px;
}
.formula .grip {
  width: 24px;
  text-align: center;
}
.fx {
  justify-content: space-between;
  width: 92px;
  padding: 0 8px;
  color: #666;
}
.fx-sign {
  font: 14px "Liberation Serif", serif;
}
.fx-sign .x {
  font-size: 11px;
}
.formula-input {
  flex: 1;
  margin-left: 2px;
  padding: 0 2px 0 8px;
}
.formula-input input {
  flex: 1;
  padding: 0;
  border: 0;
}

/* worksheet */
.sheet {
  display: flex;
  flex: 1;
  min-height: 0;
}
.grid {
  flex: 1;
  overflow: hidden;
  background: #fff;
}
table {
  width: 100%;
  table-layout: fixed;
  border-spacing: 0;
}
.c-head { width: 43px; }
.c-a { width: 132px; }
.c-b { width: 216px; }
.c-e { width: 135px; }
.c-g { width: 95px; }
.c-h { width: 186px; }
th,
td {
  box-sizing: border-box;
  height: 31px;
  padding: 0 0 0 3px;
  border-right: 1px solid #d9d9d9;
  border-bottom: 1px solid #d9d9d9;
  line-height: 26px;
}
th {
  padding: 0;
  background: #e6e6e6;
  border-color: #c6c6c6;
  color: #111;
  font-family: "Open Sans", "Noto Sans", sans-serif;
  font-size: 20px;
  font-weight: 400;
}
thead th {
  height: 30px;
  border-bottom-color: #9b9b9b;
}
tbody tr:nth-child(4n) > * {
  height: 30px;
}
th.current {
  background: #d2d2d2;
  color: #217346;
}
thead th.current {
  border-bottom-color: #217346;
}
.corner .icon {
  margin: 2px 1px 0 auto;
}
td {
  color: #000;
  font-family: Lato, "Open Sans", sans-serif;
  font-size: 21px;
  white-space: pre;
}
.edge-right {
  border-right-color: #222;
}
.edge-bottom {
  border-bottom-color: #222;
}
.title {
  padding: 0;
  background: #00b050;
  color: #fff;
  font-size: 22px;
  font-weight: 700;
  text-align: center;
}
.strong {
  font-size: 22px;
  font-weight: 700;
}
.center {
  padding: 0;
  text-align: center;
}
.num {
  padding-right: 3px;
  text-align: right;
}
.amount {
  padding-right: 11px;
  text-align: right;
}
td.editing {
  padding: 0;
  border-color: #217346;
}
.above-edit {
  border-bottom-color: #217346;
}
.before-edit {
  border-right-color: #217346;
}
.editor {
  position: relative;
  height: 30px;
  box-shadow: inset 0 0 0 1px #217346;
}
.editor input {
  display: block;
  width: 100%;
  height: 30px;
  padding: 0 0 2px 3px;
  border: 0;
  outline: 0;
  background: none;
}
.hint {
  position: absolute;
  top: 44px;
  right: 123px;
  z-index: 2;
  padding: 0 5px;
  border: 1px solid #bdbdbd;
  background: #fff;
  color: #666;
  font: 10px/15px Roboto, sans-serif;
  box-shadow: 1px 1px 2px #bbb;
}
.suggest {
  position: absolute;
  top: 32px;
  left: 14px;
  z-index: 3;
  width: 66px;
  margin: 0;
  padding: 0;
  border: 1px solid #777;
  background: #fff;
  list-style: none;
  font: 9px/14px Roboto, sans-serif;
}
.suggest li {
  display: flex;
  gap: 1px;
  padding-left: 2px;
}
.suggest span {
  flex: 1;
  padding-left: 1px;
}
.picked span {
  background: #0078d7;
  color: #fff;
}
.pointer {
  position: absolute;
  top: 54px;
  left: 62px;
  z-index: 4;
}
.vscroll {
  display: flex;
  flex-direction: column;
  align-items: center;
  width: 17px;
  padding-top: 1px;
  background: linear-gradient(90deg, #e6e6e6 2px, #d9d9d9 2px 15px, #e6e6e6 15px);
}
.vscroll button,
.hscroll button {
  justify-content: center;
  box-sizing: border-box;
  width: 13px;
  height: 13px;
  border: 1px solid #c0c0c0;
  background: #fff;
  color: #666;
}
.vscroll .thumb {
  box-sizing: border-box;
  width: 13px;
  height: 14px;
  border: 1px solid #c0c0c0;
  background: #fff;
}
.vscroll .end {
  margin-top: auto;
}

/* sheet tabs */
.sheet-bar {
  display: flex;
  height: 19px;
  flex: none;
  box-sizing: border-box;
  border-top: 1px solid #bcbcbc;
  border-bottom: 1px solid #c9c9c9;
}
.arrows {
  display: flex;
  align-items: center;
  gap: 12px;
  width: 70px;
  box-sizing: border-box;
  padding-left: 18px;
  color: #bcbcbc;
}
.sheet-tab {
  align-items: flex-start;
  box-sizing: border-box;
  height: 16px;
  padding: 0 8px;
  border-left: 1px solid #c4c4c4;
  font-family: "Open Sans", "Noto Sans", sans-serif;
  font-size: 11px;
  line-height: 13px;
}
.sheet-tab.active {
  border-bottom: 2px solid #217346;
  background: #fff;
  color: #217346;
  font-weight: 700;
}
.add {
  margin-left: 22px;
  color: #666;
}
.sheet-bar .grip {
  margin: 0 12px 0 auto;
  line-height: 16px;
}
.hscroll {
  display: flex;
  align-items: center;
  width: 38%;
  height: 13px;
  margin: 2px 16px 0 0;
  background: #d9d9d9;
}
.hscroll .thumb {
  box-sizing: border-box;
  width: 41%;
  height: 13px;
  border: 1px solid #b8b8b8;
  background: #fff;
}
.hscroll .end {
  margin-left: auto;
}

/* status bar */
.status {
  display: flex;
  align-items: center;
  height: 19px;
  flex: none;
  padding: 0 7px 0 6px;
  background: #f2f1f2;
  color: #555;
  font-size: 9px;
}
.macro {
  margin-left: 22px;
}
.views {
  display: flex;
  gap: 22px;
  margin: 0 17px 0 auto;
  color: #aaa;
}
.sign {
  color: #aaa;
  font-size: 10px;
}
.zoom {
  appearance: none;
  width: 84px;
  height: 10px;
  margin: 0 4px;
  background: linear-gradient(#aaa, #aaa) no-repeat center / 100% 1px;
}
.zoom::-webkit-slider-thumb {
  appearance: none;
  width: 1px;
  height: 6px;
  background: #999;
}
.percent-label {
  margin-left: 11px;
  color: #aaa;
}

/* taskbar */
.taskbar {
  display: flex;
  height: 33px;
  flex: none;
  background: linear-gradient(90deg, #22373d, #20353f 55%, #1b2b41 75%, #1a2744);
  color: #fff;
}
.app {
  justify-content: center;
  box-sizing: border-box;
  width: 34px;
  margin: 0 4px 0 3px;
  border-bottom: 2px solid transparent;
}
.app.open {
  border-bottom-color: #6a94bd;
}
.app.front {
  width: 40px;
  margin: 0 1px;
  background: #394b52;
}
.tray {
  margin: 0 8px 0 auto;
}
</style>
